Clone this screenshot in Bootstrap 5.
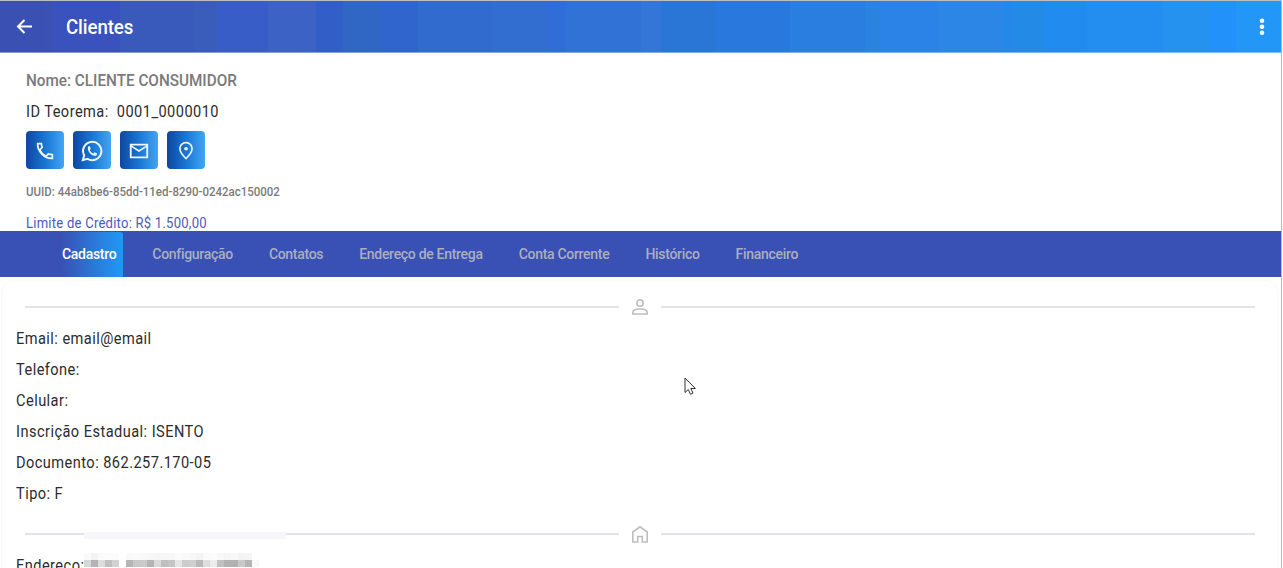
<!DOCTYPE html>
<html lang="pt-BR">
<head>
<meta charset="utf-8">
<meta name="viewport" content="width=device-width, initial-scale=1">
<title>Clientes</title>
<link rel="stylesheet" href="https://cdn.jsdelivr.net/npm/bootstrap@5.3.0/dist/css/bootstrap.min.css">
<style>
body{font-family:Roboto,sans-serif;font-size:16px;color:#2c2c2e;background:#fff;overflow:hidden}
svg{display:block;flex:none}
.window{width:1282px;height:568px;border-top:1px solid #bdbec2;border-right:1px solid #b9b9bd;overflow:hidden}
.topbar{height:52px;padding:0 14px 0 16px;color:#fff;border-bottom:1px solid rgba(255,255,255,.4);
background:linear-gradient(90deg,#3a50b3 0 45px,#3a53b0 0 52px,#3952bd 0 120px,#395aba 0 194px,#3a5dbb 0 217px,#385dc7 0 268px,#3c62c5 0 316px,#325fc7 0 343px,#3066c4 0 381px,#3065ce 0 418px,#326bce 0 492px,#316ecf 0 548px,#306dd8 0 566px,#3172d6 0 641px,#3376d8 0 661px,#2976d6 0 716px,#2978de 0 790px,#2a7edf 0 865px,#2983df 0 880px,#2b83e8 0 939px,#2b86e6 0 1002px,#2488e8 0 1014px,#238be5 0 1045px,#228bef 0 1087px,#238df0 0 1163px,#2592ef 0 1210px,#2291f9 0 1236px,#2297f8 0)}
.topbar h1{font-size:20px;font-weight:500;letter-spacing:-.1px;margin:0 0 0 33px;transform:scaleX(.935);transform-origin:0 50%}
.summary{height:178px;padding:12px 26px 0;overflow:hidden}
.line{height:31px;line-height:31px;white-space:pre;letter-spacing:.5px;transform:scaleX(.911);transform-origin:0 50%}
.client{color:#7a7a7a;font-weight:500;letter-spacing:0;transform:scaleX(.955)}
.actions{gap:9px;padding-top:4px;margin-bottom:8px}
.action{width:38px;height:38px;padding:1px 0 0;border:0;border-radius:4px;background:linear-gradient(90deg,#0d47a1,#1976d2 50%,#42a5f5);color:#f0f6ff}
.uuid{font-size:12px;font-weight:500;color:#7a7a7a;letter-spacing:0;transform:scaleX(.957)}
.credit{font-size:14px;color:#4a5bc0;letter-spacing:.25px;transform:scaleX(.933)}
.tabs{height:46px;background:#3951b5;padding-left:55px}
.tabs .nav-link{padding:0 7px;margin-right:22px;font-size:14px;font-weight:500;letter-spacing:-.3px;line-height:46px;color:#abaebe}
.tabs .nav-link.active{color:#fff;background:linear-gradient(90deg,#3951b5 10%,#2196f3 95%);border-radius:0 3px 0 0;margin-top:1px;line-height:44px}
.details{height:330px;margin:3px 3px 0 1px;padding:10px 22px 0 14px;border:1px solid #faf9fd;border-radius:12px}
.divider{height:32px;gap:12px;color:#bebebe;margin:0 0 0 9px}
.rule{height:2px;background:#e4e3e9}
.redacted{left:84px;top:531px}
.pointer{left:684px;top:376px}
</style>
</head>
<body>
<div class="window position-relative">
<header class="topbar d-flex align-items-center">
<svg width="17" height="16" viewBox="0 0 17 16" fill="none" stroke="#fff" stroke-width="2"><path d="M16 7.500H2M8.500 1 2 7.500 8.500 14"/></svg>
<h1>Clientes</h1>
<svg class="ms-auto" width="10" height="20" fill="#fff"><circle cx="5" cy="3.700" r="2.300"/><circle cx="5" cy="9.700" r="2.300"/><circle cx="5" cy="15.700" r="2.300"/></svg>
</header>
<section class="summary">
<div class="line client">Nome: CLIENTE CONSUMIDOR</div>
<div class="line">ID Teorema:  0001_0000010</div>
<div class="d-flex actions">
<button class="action d-flex align-items-center justify-content-center" aria-label="Telefone"><svg width="22" height="22" viewBox="0 0 24 24" fill="none" stroke="currentColor" stroke-width="1.900"><path d="M4 4h4l.8 4.200-2.600 2.600c1.500 2.900 3.900 5.500 6.800 7l2.600-2.600 4.400.8v4C11.500 20.500 3.500 12.500 4 4Z"/></svg></button>
<button class="action d-flex align-items-center justify-content-center" aria-label="WhatsApp"><svg width="22" height="22" viewBox="0 0 24 24" fill="none" stroke="currentColor" stroke-width="2.200"><path d="m2 22 1.500-5.200A10 10 0 1 1 7.200 20.600Z"/><path d="M8.600 6.500c-3.200 2.700.8 9.700 6 10.700 1.800.3 3-1.100 2.900-2.600l-2.600-1.300-1.300 1.500c-2-.9-3.200-2.200-4-4l1-1.400-1-2.700Z" fill="currentColor" stroke="none"/></svg></button>
<button class="action d-flex align-items-center justify-content-center" aria-label="E-mail"><svg width="22" height="22" viewBox="0 0 24 24" fill="currentColor"><path d="M22 4H2v16h20V4Zm-2 2-8 5-8-5h16Zm0 12H4V8l8 5 8-5v10Z"/></svg></button>
<button class="action d-flex align-items-center justify-content-center" aria-label="Localização"><svg width="22" height="22" viewBox="0 0 24 24" fill="currentColor"><path d="M12 2C7.800 2 4.500 5.200 4.500 9.500c0 3.300 2.500 7.200 7.500 12 5-4.800 7.500-8.700 7.500-12C19.500 5.200 16.200 2 12 2Zm0 17c-3.700-3.800-5.700-6.900-5.700-9.500C6.300 6.200 8.800 3.900 12 3.900s5.700 2.300 5.700 5.600c0 2.600-2 5.700-5.700 9.500Z"/><circle cx="12" cy="9.500" r="2"/></svg></button>
</div>
<div class="line uuid">UUID: 44ab8be6-85dd-11ed-8290-0242ac150002</div>
<div class="line credit">Limite de Crédito: R$ 1.500,00</div>
</section>
<nav class="nav tabs flex-nowrap">
<a class="nav-link active" href="#">Cadastro</a><a class="nav-link" href="#">Configuração</a><a class="nav-link" href="#">Contatos</a><a class="nav-link" href="#">Endereço de Entrega</a><a class="nav-link" href="#">Conta Corrente</a><a class="nav-link" href="#">Histórico</a><a class="nav-link" href="#">Financeiro</a>
</nav>
<main class="details">
<div class="divider d-flex align-items-center"><div class="rule flex-fill"></div><svg width="18" height="18" viewBox="0 0 18 18" fill="none" stroke="currentColor" stroke-width="1.600"><circle cx="9" cy="5" r="3.200"/><path d="M1.800 16v-1.700C1.800 12 5.500 11 9 11s7.200 1 7.200 3.300V16Z"/></svg><div class="rule flex-fill"></div></div>
<div class="line">Email: email@email</div>
<div class="line">Telefone:</div>
<div class="line">Celular:</div>
<div class="line">Inscrição Estadual: ISENTO</div>
<div class="line">Documento: 862.257.170-05</div>
<div class="line">Tipo: F</div>
<div class="divider d-flex align-items-center" style="margin-top:9px"><div class="rule flex-fill"></div><svg width="18" height="18" viewBox="0 0 18 18" fill="none" stroke="currentColor" stroke-width="1.600"><path d="M1.800 17V7L9 1.800 16.200 7v10h-4.900v-5.500H6.700V17Z"/></svg><div class="rule flex-fill"></div></div>
<div class="line">Endereço:</div>
</main>
<svg class="position-absolute redacted" id="redacted" width="202" height="36" shape-rendering="crispEdges"><path fill="#f7f7fa" d="M0 0h202v7H0z"/><path fill="#fff" d="M0 7h202v29H0z"/></svg>
<svg class="position-absolute pointer" width="13" height="20" viewBox="0 0 13 20" fill="#fff" stroke="#303040" stroke-width="1"><path d="M1 1v14.500l3.300-3 2.200 4.800 2.500-1.200-2.200-4.600h4.600Z"/></svg>
</div>
<script src="https://cdn.jsdelivr.net/npm/bootstrap@5.3.0/dist/js/bootstrap.bundle.min.js"></script>
<script>
// Mosaic that hides the street address: one grey level per 7px tile.
const rows = [
  [21, 'fa f3 fb fc fc ff f9 fa f9 f7 f6 f6 f7 fc fa f8 f4 fb fc f8 f5 f8 f4 f5 ff'],
  [28, 'd8 b3 dc bf d2 ff b5 c8 ca b4 da bf c4 e6 cc cf b9 de ec c2 b2 b1 c9 b5 f8']
];
const svg = document.getElementById('redacted');
rows.forEach(([y, tones]) => tones.split(' ').forEach((t, i) => {
  const r = document.createElementNS('http://www.w3.org/2000/svg', 'rect');
  Object.entries({x: i * 7, y, width: 7, height: 7, fill: '#' + t + t + t}).forEach(([k, v]) => r.setAttribute(k, v));
  svg.append(r);
}));
</script>
</body>
</html>
